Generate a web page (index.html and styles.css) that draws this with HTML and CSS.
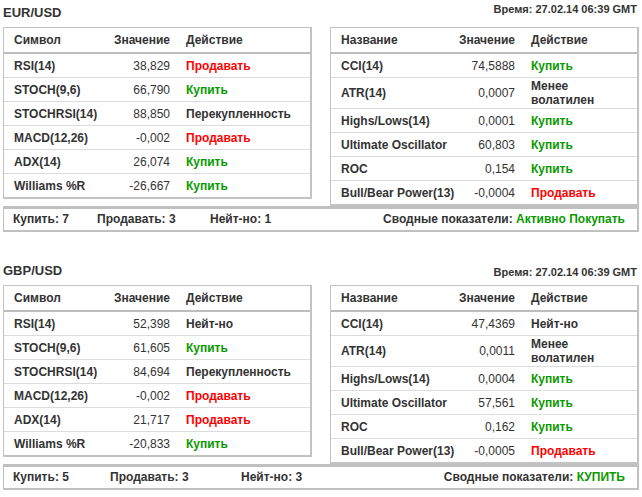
FILE: index.html
```html
<!DOCTYPE html>
<html lang="ru">
<head>
<meta charset="utf-8">
<title>Технические индикаторы</title>
<link rel="stylesheet" href="styles.css">
</head>
<body>
<section class="section">
  <div class="head">
    <div class="pair">EUR/USD</div>
    <div class="time">Время: 27.02.14 06:39 GMT</div>
  </div>
  <div class="tables">
    <table class="ind ind--left">
      <colgroup><col class="c1"><col class="c2"><col></colgroup>
      <thead><tr><th>Символ</th><th class="val">Значение</th><th class="act">Действие</th></tr></thead>
      <tbody>
        <tr><td>RSI(14)</td><td class="val">38,829</td><td class="act sell">Продавать</td></tr>
        <tr><td>STOCH(9,6)</td><td class="val">66,790</td><td class="act buy">Купить</td></tr>
        <tr><td>STOCHRSI(14)</td><td class="val">88,850</td><td class="act">Перекупленность</td></tr>
        <tr><td>MACD(12,26)</td><td class="val">-0,002</td><td class="act sell">Продавать</td></tr>
        <tr><td>ADX(14)</td><td class="val">26,074</td><td class="act buy">Купить</td></tr>
        <tr><td>Williams %R</td><td class="val">-26,667</td><td class="act buy">Купить</td></tr>
      </tbody>
    </table>
    <table class="ind ind--right">
      <colgroup><col class="c1"><col class="c2"><col></colgroup>
      <thead><tr><th>Название</th><th class="val">Значение</th><th class="act">Действие</th></tr></thead>
      <tbody>
        <tr><td>CCI(14)</td><td class="val">74,5888</td><td class="act buy">Купить</td></tr>
        <tr><td>ATR(14)</td><td class="val">0,0007</td><td class="act">Менее волатилен</td></tr>
        <tr><td>Highs/Lows(14)</td><td class="val">0,0001</td><td class="act buy">Купить</td></tr>
        <tr><td>Ultimate Oscillator</td><td class="val">60,803</td><td class="act buy">Купить</td></tr>
        <tr><td>ROC</td><td class="val">0,154</td><td class="act buy">Купить</td></tr>
        <tr><td>Bull/Bear Power(13)</td><td class="val">-0,0004</td><td class="act sell">Продавать</td></tr>
      </tbody>
    </table>
  </div>
  <div class="summary summary--a">
    <span>Купить: 7</span>
    <span>Продавать: 3</span>
    <span>Нейт-но: 1</span>
    <span class="total">Сводные показатели: <span class="buy">Активно Покупать</span></span>
  </div>
</section>

<section class="section section--second">
  <div class="head">
    <div class="pair">GBP/USD</div>
    <div class="time">Время: 27.02.14 06:39 GMT</div>
  </div>
  <div class="tables">
    <table class="ind ind--left">
      <colgroup><col class="c1"><col class="c2"><col></colgroup>
      <thead><tr><th>Символ</th><th class="val">Значение</th><th class="act">Действие</th></tr></thead>
      <tbody>
        <tr><td>RSI(14)</td><td class="val">52,398</td><td class="act">Нейт-но</td></tr>
        <tr><td>STOCH(9,6)</td><td class="val">61,605</td><td class="act buy">Купить</td></tr>
        <tr><td>STOCHRSI(14)</td><td class="val">84,694</td><td class="act">Перекупленность</td></tr>
        <tr><td>MACD(12,26)</td><td class="val">-0,002</td><td class="act sell">Продавать</td></tr>
        <tr><td>ADX(14)</td><td class="val">21,717</td><td class="act sell">Продавать</td></tr>
        <tr><td>Williams %R</td><td class="val">-20,833</td><td class="act buy">Купить</td></tr>
      </tbody>
    </table>
    <table class="ind ind--right">
      <colgroup><col class="c1"><col class="c2"><col></colgroup>
      <thead><tr><th>Название</th><th class="val">Значение</th><th class="act">Действие</th></tr></thead>
      <tbody>
        <tr><td>CCI(14)</td><td class="val">47,4369</td><td class="act">Нейт-но</td></tr>
        <tr><td>ATR(14)</td><td class="val">0,0011</td><td class="act">Менее волатилен</td></tr>
        <tr><td>Highs/Lows(14)</td><td class="val">0,0004</td><td class="act buy">Купить</td></tr>
        <tr><td>Ultimate Oscillator</td><td class="val">57,561</td><td class="act buy">Купить</td></tr>
        <tr><td>ROC</td><td class="val">0,162</td><td class="act buy">Купить</td></tr>
        <tr><td>Bull/Bear Power(13)</td><td class="val">-0,0005</td><td class="act sell">Продавать</td></tr>
      </tbody>
    </table>
  </div>
  <div class="summary summary--b">
    <span>Купить: 5</span>
    <span>Продавать: 3</span>
    <span>Нейт-но: 3</span>
    <span class="total">Сводные показатели: <span class="buy">КУПИТЬ</span></span>
  </div>
</section>
</body>
</html>
```

FILE: styles.css
```css
html, body {
  margin: 0;
  background: #fff;
}
body {
  padding: 0 3px;
  font-family: "Liberation Sans", Arial, sans-serif;
  color: #333;
}
.section {
  padding-top: 4px;
}
.section--second {
  margin-top: 26px;
}
.head {
  display: flex;
  justify-content: space-between;
  align-items: flex-start;
  height: 23px;
}
.pair {
  font-size: 13px;
  font-weight: bold;
  line-height: 17px;
}
.time {
  font-size: 11px;
  font-weight: bold;
  line-height: 11px;
  margin-right: 2px;
}
.section--second .time {
  margin-top: 5px;
}
.tables {
  display: flex;
  align-items: flex-start;
  gap: 18px;
}
.ind {
  box-sizing: border-box;
  width: 309px;
  table-layout: fixed;
  border-collapse: separate;
  border-spacing: 0;
  border: 1px solid #c3c3c3;
  border-right-width: 2px;
  border-bottom-width: 2px;
  font-size: 12px;
  font-weight: bold;
}
.ind--left .c1 { width: 100px; }
.ind--left .c2 { width: 74px; }
.ind--right .c1 { width: 124px; }
.ind--right .c2 { width: 68px; }
.ind th {
  height: 24px;
  padding: 0 0 0 10px;
  text-align: left;
  font-weight: bold;
  line-height: 24px;
  border-bottom: 2px solid #bdbdbd;
  white-space: nowrap;
}
.ind td {
  height: 21px;
  padding: 1px 0 1px 10px;
  line-height: 14px;
  border-bottom: 1px solid #dcdcdc;
  white-space: nowrap;
  vertical-align: middle;
}
.ind tbody tr:last-child td {
  border-bottom: none;
}
.ind th.val,
.ind td.val {
  text-align: right;
  padding-left: 0;
  padding-right: 8px;
}
.ind td.val {
  font-weight: normal;
}
.ind th.act,
.ind td.act {
  padding-left: 8px;
}
.ind--right td.act {
  white-space: normal;
  padding-right: 12px;
}
.buy { color: #0a9a00; }
.sell { color: #ff0000; }

.summary {
  display: grid;
  align-items: center;
  height: 21px;
  padding: 0 12px 0 9px;
  border: 1px solid #c0c0c0;
  border-top-width: 3px;
  border-right-width: 2px;
  border-bottom-width: 2px;
  font-size: 12px;
  font-weight: bold;
  line-height: 21px;
  white-space: nowrap;
}
.summary--a { grid-template-columns: 84px 113px 1fr auto; }
.summary--b { grid-template-columns: 97px 131px 1fr auto; }
.total { text-align: right; }
```
